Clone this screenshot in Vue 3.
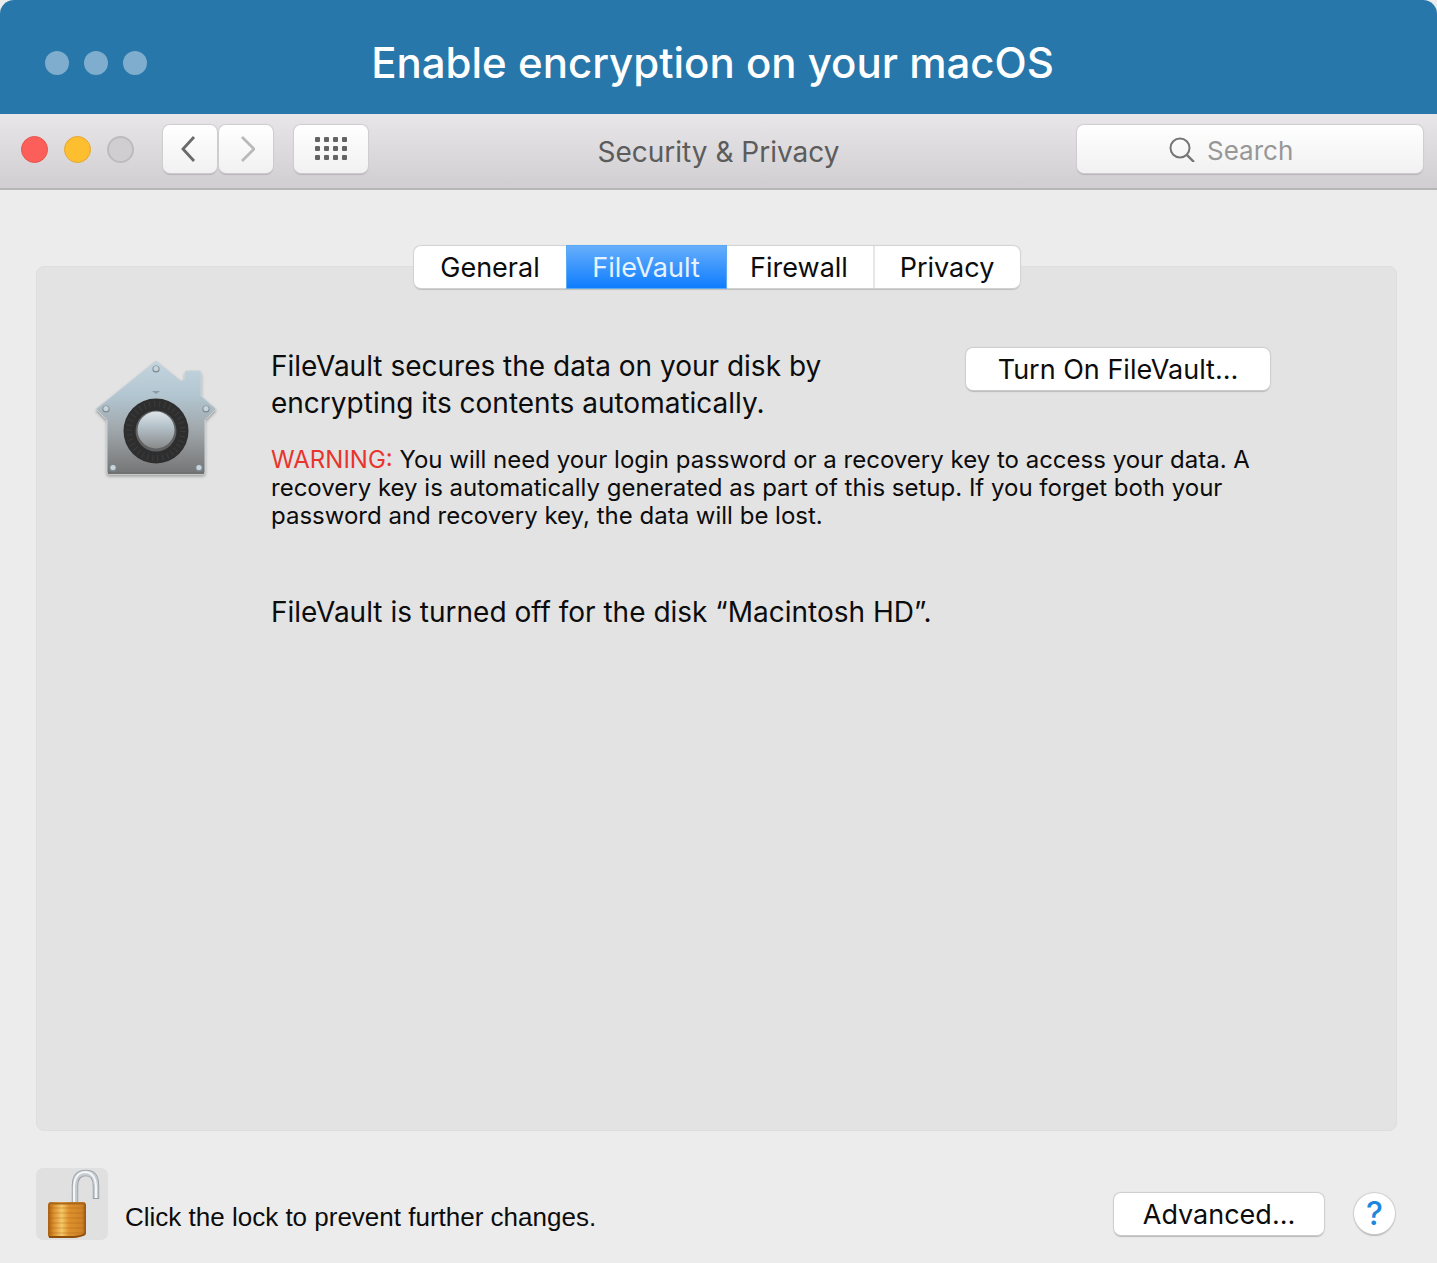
<template>
  <div class="page">
    <header class="banner">
      <div class="banner-dots" aria-hidden="true">
        <span v-for="n in 3" :key="n" class="banner-dot"></span>
      </div>
      <h1 class="banner-title">Enable encryption on your macOS</h1>
    </header>

    <div class="toolbar">
      <div class="toolbar-left">
        <div class="lights">
          <button
            v-for="light in lights"
            :key="light"
            type="button"
            class="light"
            :class="light"
            :aria-label="light"
          ></button>
        </div>
        <div class="nav">
          <button type="button" class="tool back" aria-label="Back">
            <svg viewBox="0 0 18 28" class="chevron">
              <path d="M13 2 L2 14 L13 26" fill="none" stroke="#6a6a6a" stroke-width="2.8" />
            </svg>
          </button>
          <button type="button" class="tool forward" aria-label="Forward">
            <svg viewBox="0 0 18 28" class="chevron">
              <path d="M5 2 L17 14 L5 26" fill="none" stroke="#b9b9b9" stroke-width="2.8" />
            </svg>
          </button>
        </div>
        <button type="button" class="tool all" aria-label="Show all">
          <svg viewBox="0 0 32 24" class="grid-icon">
            <rect
              v-for="dot in gridDots"
              :key="dot.key"
              :x="dot.x"
              :y="dot.y"
              width="5"
              height="5"
              rx="1"
              fill="#636363"
            />
          </svg>
        </button>
      </div>

      <h2 class="toolbar-title">Security &amp; Privacy</h2>

      <label class="search">
        <svg viewBox="0 0 26 26" class="search-icon" aria-hidden="true">
          <circle cx="11" cy="12" r="9.5" fill="none" stroke="#757575" stroke-width="2" />
          <path d="M17.8 18.8 L25 26" stroke="#757575" stroke-width="2.4" />
        </svg>
        <input v-model="query" type="text" class="search-input" placeholder="Search" aria-label="Search" />
      </label>
    </div>

    <main class="content">
      <nav class="tabs">
        <button
          v-for="tab in tabs"
          :key="tab"
          type="button"
          class="tab"
          :class="{ active: tab === activeTab }"
          @click="activeTab = tab"
        >{{ tab }}</button>
      </nav>

      <section class="panel">
        <svg viewBox="0 0 130 130" class="vault" role="img" aria-label="FileVault">
          <defs>
            <linearGradient id="house" x1="0" y1="0" x2="0" y2="1">
              <stop offset="0" stop-color="#c3d5df" />
              <stop offset="0.3" stop-color="#b2c6d1" />
              <stop offset="0.6" stop-color="#a1a8ac" />
              <stop offset="1" stop-color="#747474" />
            </linearGradient>
            <linearGradient id="knob" x1="0" y1="0" x2="0" y2="1">
              <stop offset="0" stop-color="#dde4e8" />
              <stop offset="0.4" stop-color="#b5c2ca" />
              <stop offset="1" stop-color="#8a8a8a" />
            </linearGradient>
            <filter id="drop" x="-10%" y="-10%" width="120%" height="125%">
              <feDropShadow dx="0" dy="2" stdDeviation="1.5" flood-color="#000" flood-opacity="0.3" />
            </filter>
          </defs>
          <path
            d="M65 6 L90 26 L94 24 V18 Q94 16 96 16 H108 Q110 16 110 18 V41 L125 54 L114 65 V117 Q114 119 112 119 H18 Q16 119 16 117 V65 L5 54 Z"
            fill="url(#house)"
            stroke="#c7d0d5"
            stroke-width="1"
            stroke-linejoin="round"
            filter="url(#drop)"
          />
          <path d="M17 118 H113" stroke="#707070" stroke-width="2" />
          <path d="M61 36 H69 L65 39 Z" fill="#8a9ca6" />
          <g v-for="rivet in rivets" :key="rivet.key">
            <circle :cx="rivet.x" :cy="rivet.y" r="3.6" fill="#7d8b93" />
            <circle :cx="rivet.x" :cy="rivet.y - 0.5" r="2.6" fill="#c8d4da" />
          </g>
          <circle cx="65" cy="76" r="32.5" fill="#2e2e2e" />
          <circle cx="65" cy="76" r="27" fill="none" stroke="#3d3d3d" stroke-width="6" stroke-dasharray="1 4" />
          <circle cx="65" cy="76" r="20.5" fill="#5f6163" />
          <circle cx="65" cy="75" r="18.5" fill="url(#knob)" />
        </svg>

        <div class="details">
          <div class="intro-row">
            <p class="intro">FileVault secures the data on your disk by encrypting its contents automatically.</p>
            <button type="button" class="push turn-on">Turn On FileVault…</button>
          </div>
          <p class="warning">
            <span class="warning-label">WARNING:</span> You will need your login password or a recovery key to access your data. A recovery key is automatically generated as part of this setup. If you forget both your password and recovery key, the data will be lost.
          </p>
          <p class="status">FileVault is turned off for the disk “Macintosh HD”.</p>
        </div>
      </section>

      <footer class="footer">
        <button type="button" class="lock" aria-label="Lock">
          <svg viewBox="0 0 72 72" class="lock-icon">
            <defs>
              <linearGradient id="brass" x1="0" y1="0" x2="1" y2="0">
                <stop offset="0" stop-color="#a65d12" />
                <stop offset="0.14" stop-color="#d98d2b" />
                <stop offset="0.36" stop-color="#f6c868" />
                <stop offset="0.55" stop-color="#dd922d" />
                <stop offset="0.9" stop-color="#cf8226" />
                <stop offset="1" stop-color="#955310" />
              </linearGradient>
            </defs>
            <path d="M39 36 V18 Q39 5 50 5 Q60 5 60 18 V31" fill="none" stroke="#999fa4" stroke-width="6.5" />
            <path d="M39 36 V18 Q39 5 50 5 Q60 5 60 18 V30" fill="none" stroke="#c5cbd0" stroke-width="4.8" />
            <path d="M38 36 V18 Q39 4 50 4 Q59 5 60 18 V30" fill="none" stroke="#f3f5f6" stroke-width="2" />
            <path d="M12 37 Q12 34 16 34 H46 Q50 34 50 37 V66 Q47 69 38 70 H16 Q12 70 12 67 Z" fill="url(#brass)" />
            <path
              v-for="y in ridges"
              :key="y"
              :d="`M13 ${y} H49`"
              stroke="#9c5512"
              stroke-width="1.2"
              stroke-opacity="0.35"
            />
            <path d="M13 35.5 H49" stroke="#a8671c" stroke-width="2" />
            <path d="M13 69 H38 Q46 68 49 66" fill="none" stroke="#8d4d0d" stroke-width="1.8" />
          </svg>
        </button>
        <p class="lock-note">Click the lock to prevent further changes.</p>
        <button type="button" class="push advanced">Advanced…</button>
        <button type="button" class="help" aria-label="Help">?</button>
      </footer>
    </main>
  </div>
</template>

<script setup>
import { ref } from 'vue'

const lights = ['close', 'minimize', 'zoom']
const tabs = ['General', 'FileVault', 'Firewall', 'Privacy']
const activeTab = ref('FileVault')
const query = ref('')

// 4 x 3 dots of the "show all" button
const gridDots = Array.from({ length: 12 }, (_, i) => ({
  key: i,
  x: (i % 4) * 9,
  y: Math.floor(i / 4) * 9,
}))

const rivets = [
  { key: 'top', x: 65, y: 14 },
  { key: 'left', x: 15, y: 54 },
  { key: 'right', x: 115, y: 54 },
  { key: 'bottom-left', x: 22, y: 113 },
  { key: 'bottom-right', x: 108, y: 113 },
]

const ridges = [40, 45, 50, 55, 60, 65]
</script>

<style>
body {
  margin: 0;
  background: #ececec;
}
</style>

<style scoped>
.page {
  display: flex;
  flex-direction: column;
  min-height: 100vh;
  background: #ececec;
  font-family: Inter, "Liberation Sans", sans-serif;
  color: #0c0c0c;
}

.page * {
  box-sizing: border-box;
}

h1,
h2,
p {
  margin: 0;
}

button {
  padding: 0;
  border: 0;
  font-family: inherit;
  color: inherit;
}

/* Banner */

.banner {
  display: grid;
  grid-template-columns: 1fr auto 1fr;
  align-items: center;
  height: 114px;
  padding: 12px 57px 0 45px;
  border-radius: 14px 14px 0 0;
  background: #2877ab;
}

.banner-dots {
  display: flex;
  gap: 15px;
}

.banner-dot {
  width: 24px;
  height: 24px;
  border-radius: 50%;
  background: #7eadcd;
}

.banner-title {
  font-size: 42px;
  font-weight: 500;
  line-height: 52px;
  color: #fff;
}

/* Toolbar */

.toolbar {
  display: grid;
  grid-template-columns: 1fr auto 1fr;
  align-items: center;
  height: 76px;
  padding: 0 14px 4px;
  border-bottom: 2px solid #b7b6b7;
  background: linear-gradient(#e8e6e8, #d0ced0);
}

.toolbar-left {
  display: flex;
  align-items: center;
  gap: 21px;
}

.lights {
  display: flex;
  gap: 16px;
  margin: 0 8px 0 7px;
}

.light {
  width: 27px;
  height: 27px;
  border: 1px solid #ea5149;
  border-radius: 50%;
  background: #fc5f59;
}

.light.minimize {
  border-color: #e5a530;
  background: #fdbe30;
}

.light.zoom {
  border: 2px solid #bdbbbd;
  background: #d0ced0;
}

.nav {
  display: flex;
  gap: 2px;
}

.tool {
  display: flex;
  align-items: center;
  justify-content: center;
  width: 54px;
  height: 48px;
  border-radius: 7px;
  background: linear-gradient(#fff, #f1f1f1);
  box-shadow: 0 0 1px 1px #cfcdcf, 0 2px 1px #b3b2b3;
}

.tool.all {
  width: 74px;
}

.chevron {
  width: 18px;
  height: 28px;
}

.grid-icon {
  width: 32px;
  height: 24px;
}

.toolbar-title {
  padding-top: 6px;
  font-size: 28px;
  font-weight: 400;
  line-height: 32px;
  color: #5c5c5c;
}

.search {
  display: flex;
  align-items: center;
  gap: 12px;
  justify-self: end;
  width: 346px;
  height: 48px;
  padding-left: 92px;
  border-radius: 7px;
  background: linear-gradient(#fff, #f1f1f1);
  box-shadow: 0 0 1px 1px #cfcdcf, 0 2px 1px #b3b2b3;
}

.search-icon {
  flex: none;
  width: 26px;
  height: 26px;
}

.search-input {
  flex: 1;
  min-width: 0;
  padding: 2px 0 0;
  border: 0;
  outline: 0;
  background: transparent;
  font-family: inherit;
  font-size: 26px;
  color: #333;
}

.search-input::placeholder {
  color: #979797;
  opacity: 1;
}

/* Content */

.content {
  display: flex;
  flex: 1;
  flex-direction: column;
  padding: 56px 40px 23px 36px;
}

.tabs {
  z-index: 1;
  display: flex;
  align-self: center;
  margin-bottom: -22px;
  border-radius: 7px;
  background: #fff;
  box-shadow: 0 0 1px 1px #d2d2d2, 0 2px 1px #bdbdbd;
}

.tab {
  width: 147px;
  height: 42px;
  border-left: 2px solid #e6e6e6;
  background: transparent;
  font-size: 27px;
}

.tab:first-child {
  width: 153px;
}

.tab:first-child,
.tab.active,
.tab.active + .tab {
  border-left: 0;
}

.tab.active {
  width: 159px;
  background: linear-gradient(#66aefb, #0f7dfe);
  box-shadow: 0 0 0 1px #5aa9f5;
  color: #e6f3ff;
}

.panel {
  display: flex;
  flex: 1;
  align-items: flex-start;
  gap: 50px;
  padding: 81px 126px 40px 54px;
  border: 1px solid #dedede;
  border-radius: 8px;
  background: #e3e3e3;
}

.vault {
  flex: none;
  width: 130px;
  height: 130px;
  margin-top: 7px;
}

.details {
  flex: 1;
}

.intro-row {
  display: flex;
  align-items: flex-start;
  justify-content: space-between;
}

.intro {
  max-width: 600px;
  font-size: 28px;
  line-height: 37px;
}

.push {
  height: 42px;
  border-radius: 7px;
  background: #fff;
  box-shadow: 0 0 1px 1px #cdcdcd, 0 2px 1px #b9b9b9;
  font-size: 27px;
}

.turn-on {
  flex: none;
  width: 304px;
}

.warning {
  margin-top: 24px;
  font-size: 24px;
  line-height: 28px;
}

.warning-label {
  color: #e8352e;
}

.status {
  margin-top: 64px;
  font-size: 28px;
  line-height: 37px;
}

/* Footer */

.footer {
  display: flex;
  align-items: center;
  margin-top: 37px;
  padding-right: 2px;
}

.lock {
  width: 72px;
  height: 72px;
  border-radius: 7px;
  background: #e0e0e0;
}

.lock-icon {
  display: block;
  width: 72px;
  height: 72px;
}

.lock-note {
  flex: 1;
  padding: 26px 0 0 17px;
  font-family: "Liberation Sans", Arial, sans-serif;
  font-size: 26px;
  line-height: 32px;
}

.advanced {
  width: 210px;
  margin: 20px 30px 0 0;
}

.help {
  width: 41px;
  height: 41px;
  margin-top: 18px;
  border-radius: 50%;
  background: #fff;
  box-shadow: 0 0 1px 1px #cdcdcd, 0 2px 1px #b9b9b9;
  font-size: 32px;
  font-weight: 500;
  line-height: 41px;
  color: #1f86e0;
}
</style>
